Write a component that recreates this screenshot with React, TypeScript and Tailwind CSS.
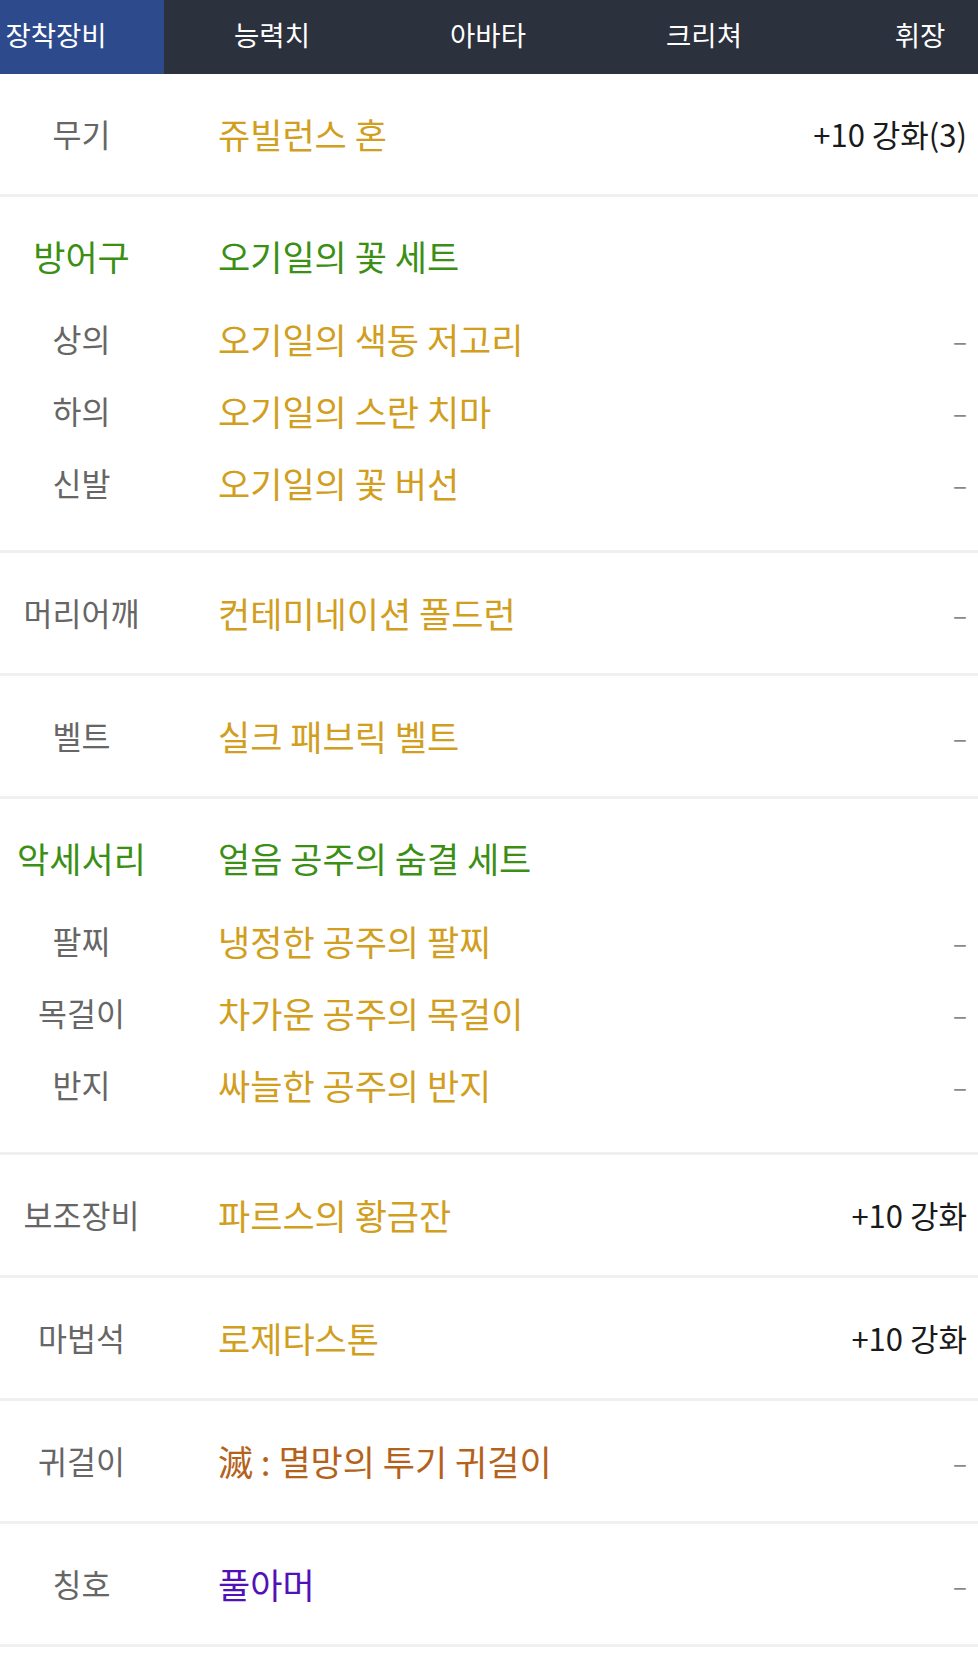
import React from "react";

type Item = { label: string; name: string; extra?: string; color?: string };
type Section =
  | { kind: "single"; item: Item }
  | { kind: "group"; title: string; setName: string; items: Item[] };

const tabs = ["장착장비", "능력치", "아바타", "크리쳐", "휘장"];

const sections: Section[] = [
  { kind: "single", item: { label: "무기", name: "쥬빌런스 혼", extra: "+10 강화(3)" } },
  {
    kind: "group",
    title: "방어구",
    setName: "오기일의 꽃 세트",
    items: [
      { label: "상의", name: "오기일의 색동 저고리" },
      { label: "하의", name: "오기일의 스란 치마" },
      { label: "신발", name: "오기일의 꽃 버선" },
    ],
  },
  { kind: "single", item: { label: "머리어깨", name: "컨테미네이션 폴드런" } },
  { kind: "single", item: { label: "벨트", name: "실크 패브릭 벨트" } },
  {
    kind: "group",
    title: "악세서리",
    setName: "얼음 공주의 숨결 세트",
    items: [
      { label: "팔찌", name: "냉정한 공주의 팔찌" },
      { label: "목걸이", name: "차가운 공주의 목걸이" },
      { label: "반지", name: "싸늘한 공주의 반지" },
    ],
  },
  { kind: "single", item: { label: "보조장비", name: "파르스의 황금잔", extra: "+10 강화" } },
  { kind: "single", item: { label: "마법석", name: "로제타스톤", extra: "+10 강화" } },
  { kind: "single", item: { label: "귀걸이", name: "滅 : 멸망의 투기 귀걸이", color: "text-[#b4621b]" } },
  { kind: "single", item: { label: "칭호", name: "풀아머", color: "text-[#5211b8]" } },
];

function Row({ item, h }: { item: Item; h: string }) {
  return (
    <div className={`flex items-center ${h}`}>
      <div className="w-[163px] shrink-0 text-center text-[31.5px] text-[#666666]">{item.label}</div>
      <div className={`flex-1 pl-[55px] text-[35px] ${item.color ?? "text-[#d19e1e]"}`}>{item.name}</div>
      {item.extra ? (
        <div className="pr-[11px] text-[31px] text-[#1a1a1a]">{item.extra}</div>
      ) : (
        <div className="pr-[11px] text-[26px] text-[#888888]">–</div>
      )}
    </div>
  );
}

export default function App() {
  return (
    <div
      className="min-h-screen w-[978px] bg-white"
      style={{ fontFamily: '"Noto Sans CJK KR", "Noto Sans", sans-serif' }}
    >
      <nav className="flex h-[74px] overflow-hidden bg-[#2b313d]">
        <div className="-ml-[52px] flex shrink-0">
          {tabs.map((t, i) => (
            <div
              key={t}
              className={`flex w-[216px] shrink-0 items-center justify-center pb-[5px] text-[27.5px] text-white ${
                i === 0 ? "bg-[#2d4a8d]" : ""
              }`}
            >
              {t}
            </div>
          ))}
        </div>
      </nav>
      {sections.map((s, idx) =>
        s.kind === "single" ? (
          <div key={idx} className="border-b-[3px] border-[#f0f0f0]">
            <Row item={s.item} h="h-[120px]" />
          </div>
        ) : (
          <div key={idx} className="border-b-[3px] border-[#f0f0f0] pt-[23px] pb-[31px]">
            <div className="mb-[11px] flex h-[72px] items-center">
              <div className="w-[163px] shrink-0 text-center text-[35px] text-[#3b8f14]">{s.title}</div>
              <div className="flex-1 pl-[55px] text-[35px] text-[#3b8f14]">{s.setName}</div>
            </div>
            {s.items.map((it) => (
              <Row key={it.label} item={it} h="h-[72px]" />
            ))}
          </div>
        )
      )}
    </div>
  );
}
